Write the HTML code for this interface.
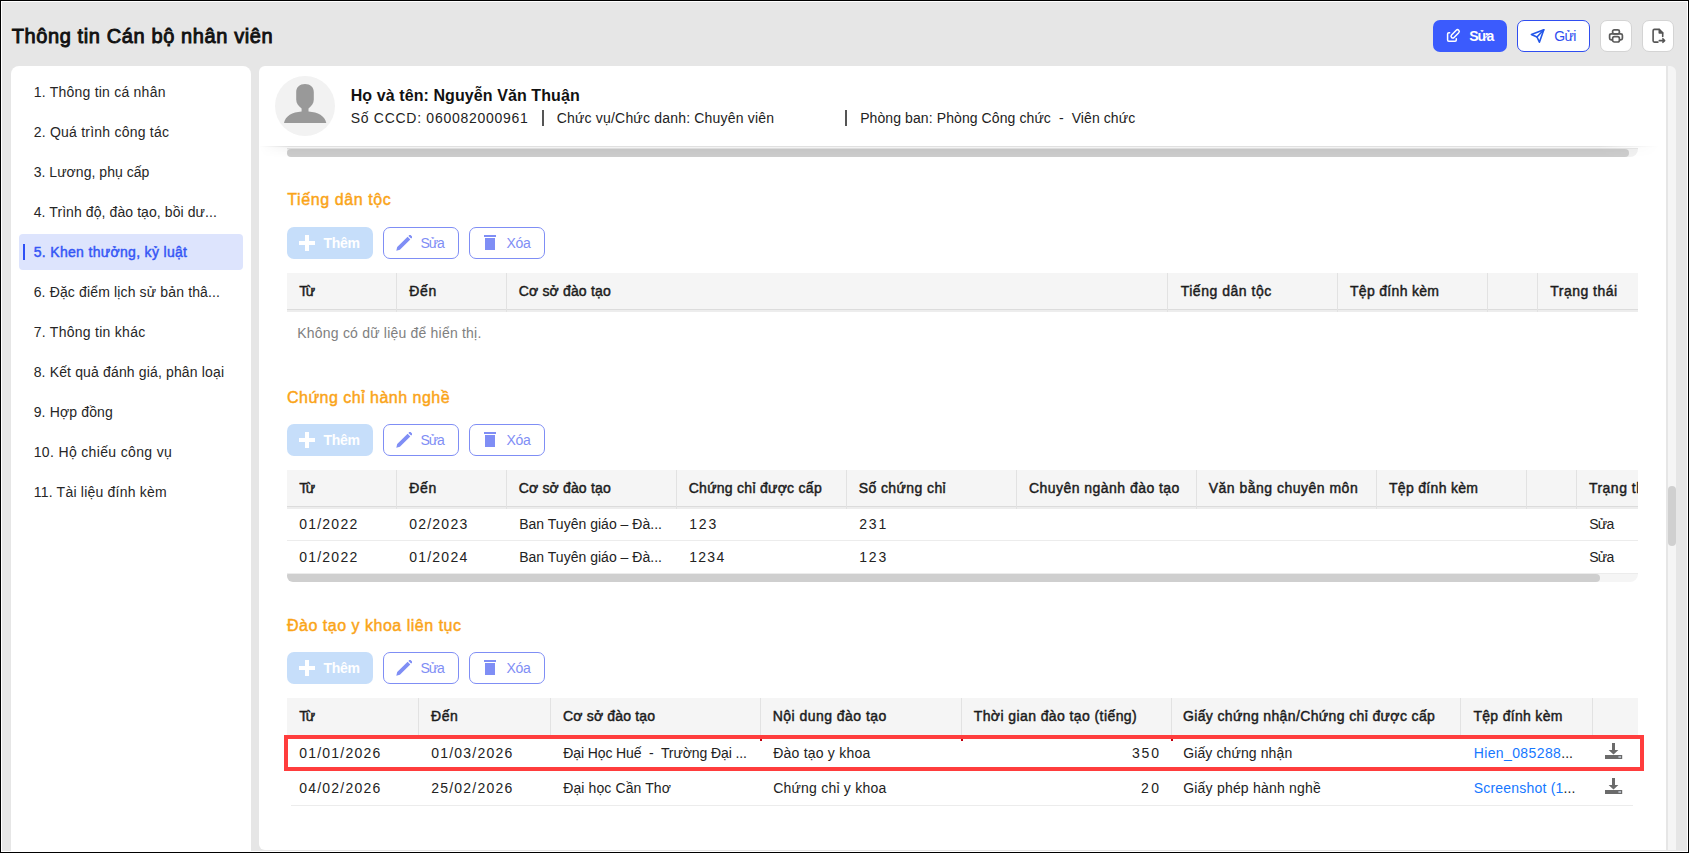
<!DOCTYPE html>
<html><head><meta charset="utf-8">
<style>
html,body{margin:0;padding:0;width:1689px;height:853px;overflow:hidden;background:#000;}
body{position:relative;font-family:"Liberation Sans",sans-serif;}
.a{position:absolute;}
.t{position:absolute;white-space:pre;font-family:"Liberation Sans",sans-serif;}
#frame{position:absolute;left:1px;top:1px;width:1687px;height:851px;background:#fff;}
#bg{position:absolute;left:2px;top:2px;width:1685px;height:849px;background:#e6e6e6;}
.btnb{position:absolute;box-sizing:border-box;border-radius:7px;}
.hd{position:absolute;background:#f5f5f5;}
.vs{position:absolute;width:1px;background:#e2e2e2;}
.hl{position:absolute;height:1px;background:#ececec;}
</style></head><body>
<div id="frame"></div>
<div id="bg"></div>

<!-- sidebar -->
<div class="a" style="left:11px;top:66px;width:240px;height:785px;background:#fff;border-radius:8px 8px 0 0;"></div>
<div class="a" style="left:19px;top:234px;width:224px;height:36px;background:#dde4fd;border-radius:4px;"></div>
<div class="a" style="left:23px;top:244px;width:2px;height:16px;background:#2f50f6;"></div>

<!-- main card -->
<div class="a" style="left:259px;top:66px;width:1407px;height:784px;background:#fff;border-radius:6px 0 0 6px;"></div>
<div class="a" style="left:1668px;top:66px;width:8px;height:784px;background:#f5f5f5;border-radius:0 6px 0 0;"></div>
<div class="a" style="left:1668px;top:486px;width:8px;height:60px;background:#d0d0d0;border-radius:4px;"></div>

<!-- top buttons -->
<div class="btnb" style="left:1433px;top:20px;width:74px;height:32px;background:#3b5bfd;"></div>
<svg class="a" style="left:1442px;top:26px" width="22" height="20" viewBox="0 0 22 20" fill="none" stroke="#fff" stroke-width="1.5" stroke-linecap="round" stroke-linejoin="round">
  <path d="M7.7 6.8H6.8c-.8 0-1.2.4-1.2 1.2v6.1c0 .8.4 1.2 1.2 1.2h6.3c.8 0 1.2-.4 1.2-1.2v-1.4"/>
  <g transform="rotate(-45 13.15 7.85)"><rect x="8.1" y="6.1" width="10.1" height="3.5" rx="1.75"/></g>
</svg>
<div class="btnb" style="left:1517px;top:20px;width:73px;height:32px;background:#fff;border:1px solid #2f4df0;"></div>
<svg class="a" style="left:1530px;top:28px" width="16" height="16" viewBox="0 0 16 16" fill="none" stroke="#2356e8" stroke-width="1.6" stroke-linecap="round" stroke-linejoin="round">
  <path d="M13.8 1.8L1.4 6.5 7 9l2.4 5.2z"/>
  <path d="M13.8 1.8L7 9"/>
</svg>
<div class="btnb" style="left:1600px;top:20px;width:32px;height:32px;background:#fff;border:1px solid #d4d4d4;border-radius:7px;"></div>
<svg class="a" style="left:1608px;top:28px" width="16" height="16" viewBox="0 0 16 16" fill="none" stroke="#5a5a5a" stroke-width="1.7" stroke-linejoin="round">
  <rect x="4.6" y="1.8" width="6.8" height="4" rx="1.6"/>
  <path d="M4.3 11.8H3.2c-1 0-1.6-.6-1.6-1.6V7.4c0-1 .6-1.6 1.6-1.6h9.6c1 0 1.6.6 1.6 1.6v2.8c0 1-.6 1.6-1.6 1.6h-1.1"/>
  <rect x="4.6" y="8.6" width="6.8" height="5.4" rx="1.8"/>
</svg>
<div class="btnb" style="left:1642px;top:20px;width:32px;height:32px;background:#fff;border:1px solid #d4d4d4;border-radius:7px;"></div>
<svg class="a" style="left:1651px;top:28px" width="16" height="16" viewBox="0 0 16 16" fill="none" stroke="#555" stroke-width="1.6" stroke-linejoin="round" stroke-linecap="round">
  <path d="M7 14.1H3.4c-.9 0-1.3-.4-1.3-1.3V2.7c0-.9.4-1.3 1.3-1.3H8.2l3.5 3.5v3.6"/>
  <path d="M8.3 1.6v3.3h3.3" fill="#555"/>
  <path d="M8.3 12.6h5.3M11.9 10.9l1.7 1.7-1.7 1.7"/>
</svg>

<!-- header of main -->
<div class="a" style="left:287px;top:148px;width:1351px;height:9px;background:#f1f1f1;border-top:1px solid #e6e6e6;box-sizing:border-box;border-radius:0 0 8px 8px;"></div>
<div class="a" style="left:287px;top:149px;width:1342px;height:8px;background:#cdcdcd;border-radius:4px;"></div>
<div class="a" style="left:259px;top:146px;width:1400px;height:12px;background:linear-gradient(180deg,rgba(0,0,0,0.12) 0,rgba(0,0,0,0.12) 1px,rgba(0,0,0,0.05) 1px,rgba(0,0,0,0.03) 3px,rgba(0,0,0,0.01) 8px,rgba(0,0,0,0) 12px);-webkit-mask-image:linear-gradient(90deg,transparent 0,#000 30px,#000 1340px,transparent 1400px);"></div>
<svg class="a" style="left:275px;top:76px" width="60" height="60" viewBox="0 0 60 60">
  <circle cx="30" cy="30" r="30" fill="#f2f2f2"/>
  <path fill="#999" d="M21.2 16.2c0-5.2 3.6-8.2 8.8-8.2s8.8 3 8.8 8.2v7.4c0 3.8-2.2 6.8-5.3 8.8v3c9.5 0.6 16.4 4.4 17.8 11.6H9c1.4-7.2 8.2-11 17.6-11.6v-3c-3.2-2-5.4-5-5.4-8.8z"/>
</svg>
<div class="a" style="left:542.2px;top:110px;width:1.9px;height:16px;background:#555;"></div>
<div class="a" style="left:845.4px;top:110px;width:1.9px;height:16px;background:#555;"></div>

<!-- Section buttons -->
<div class="btnb" style="left:287px;top:227px;width:86px;height:32px;background:#c6defa;border-radius:7px;"></div>
<div class="a" style="left:299px;top:241px;width:16px;height:4px;background:#fff;"></div>
<div class="a" style="left:305px;top:235px;width:4px;height:16px;background:#fff;"></div>
<div class="btnb" style="left:383px;top:227px;width:76px;height:32px;border:1px solid #7f8ef5;border-radius:7px;"></div>
<svg class="a" style="left:396px;top:235px" width="16" height="16" viewBox="0 0 16 16"><path fill="#7f8ef5" d="M0.3 15.7l0.9-3.6L11.6 1.7l2.7 2.7L3.9 14.8z M12.4 0.9l0.7-0.7c0.5-0.5 1.2-0.5 1.7 0l1 1c0.5 0.5 0.5 1.2 0 1.7l-0.7 0.7z"/></svg>
<div class="btnb" style="left:469px;top:227px;width:76px;height:32px;border:1px solid #7f8ef5;border-radius:7px;"></div>
<div class="a" style="left:483.5px;top:235px;width:12px;height:1.6px;background:#7f8ef5;"></div>
<div class="a" style="left:484.5px;top:238px;width:10px;height:11.5px;background:#7f8ef5;"></div>
<div class="btnb" style="left:287px;top:424px;width:86px;height:32px;background:#c6defa;border-radius:7px;"></div>
<div class="a" style="left:299px;top:438px;width:16px;height:4px;background:#fff;"></div>
<div class="a" style="left:305px;top:432px;width:4px;height:16px;background:#fff;"></div>
<div class="btnb" style="left:383px;top:424px;width:76px;height:32px;border:1px solid #7f8ef5;border-radius:7px;"></div>
<svg class="a" style="left:396px;top:432px" width="16" height="16" viewBox="0 0 16 16"><path fill="#7f8ef5" d="M0.3 15.7l0.9-3.6L11.6 1.7l2.7 2.7L3.9 14.8z M12.4 0.9l0.7-0.7c0.5-0.5 1.2-0.5 1.7 0l1 1c0.5 0.5 0.5 1.2 0 1.7l-0.7 0.7z"/></svg>
<div class="btnb" style="left:469px;top:424px;width:76px;height:32px;border:1px solid #7f8ef5;border-radius:7px;"></div>
<div class="a" style="left:483.5px;top:432px;width:12px;height:1.6px;background:#7f8ef5;"></div>
<div class="a" style="left:484.5px;top:435px;width:10px;height:11.5px;background:#7f8ef5;"></div>
<div class="btnb" style="left:287px;top:652px;width:86px;height:32px;background:#c6defa;border-radius:7px;"></div>
<div class="a" style="left:299px;top:666px;width:16px;height:4px;background:#fff;"></div>
<div class="a" style="left:305px;top:660px;width:4px;height:16px;background:#fff;"></div>
<div class="btnb" style="left:383px;top:652px;width:76px;height:32px;border:1px solid #7f8ef5;border-radius:7px;"></div>
<svg class="a" style="left:396px;top:660px" width="16" height="16" viewBox="0 0 16 16"><path fill="#7f8ef5" d="M0.3 15.7l0.9-3.6L11.6 1.7l2.7 2.7L3.9 14.8z M12.4 0.9l0.7-0.7c0.5-0.5 1.2-0.5 1.7 0l1 1c0.5 0.5 0.5 1.2 0 1.7l-0.7 0.7z"/></svg>
<div class="btnb" style="left:469px;top:652px;width:76px;height:32px;border:1px solid #7f8ef5;border-radius:7px;"></div>
<div class="a" style="left:483.5px;top:660px;width:12px;height:1.6px;background:#7f8ef5;"></div>
<div class="a" style="left:484.5px;top:663px;width:10px;height:11.5px;background:#7f8ef5;"></div>

<!-- table 1 -->
<div class="hd" style="left:287px;top:273px;width:1351px;height:36px;"></div>
<div class="a" style="left:287px;top:309px;width:1351px;height:1px;background:#dcdcdc;"></div>
<div class="a" style="left:287px;top:310px;width:1351px;height:2px;background:#ededed;"></div>

<!-- table 2 -->
<div class="hd" style="left:287px;top:470px;width:1351px;height:36px;"></div>
<div class="a" style="left:287px;top:506px;width:1351px;height:1px;background:#dcdcdc;"></div>
<div class="a" style="left:287px;top:507px;width:1351px;height:2px;background:#ededed;"></div>
<div class="hl" style="left:287px;top:540px;width:1351px;"></div>
<div class="hl" style="left:287px;top:573px;width:1351px;"></div>
<div class="a" style="left:287px;top:574px;width:1351px;height:8px;background:#f5f5f5;border-radius:0 0 8px 8px;"></div>
<div class="a" style="left:287px;top:574px;width:1313px;height:8px;background:#cfcfcf;border-radius:1px 4px 4px 6px;"></div>

<!-- table 3 -->
<div class="hd" style="left:287px;top:698px;width:1351px;height:37px;"></div>
<div class="hl" style="left:291px;top:805px;width:1342px;"></div>

<div class="vs" style="left:396px;top:273px;height:39px;"></div>
<div class="vs" style="left:506px;top:273px;height:39px;"></div>
<div class="vs" style="left:1167px;top:273px;height:39px;"></div>
<div class="vs" style="left:1337px;top:273px;height:39px;"></div>
<div class="vs" style="left:1487px;top:273px;height:39px;"></div>
<div class="vs" style="left:1537px;top:273px;height:39px;"></div>
<div class="vs" style="left:396px;top:470px;height:39px;"></div>
<div class="vs" style="left:506px;top:470px;height:39px;"></div>
<div class="vs" style="left:676px;top:470px;height:39px;"></div>
<div class="vs" style="left:846px;top:470px;height:39px;"></div>
<div class="vs" style="left:1016px;top:470px;height:39px;"></div>
<div class="vs" style="left:1196px;top:470px;height:39px;"></div>
<div class="vs" style="left:1376px;top:470px;height:39px;"></div>
<div class="vs" style="left:1526px;top:470px;height:39px;"></div>
<div class="vs" style="left:1576px;top:470px;height:39px;"></div>
<div class="vs" style="left:418px;top:698px;height:37px;"></div>
<div class="vs" style="left:550px;top:698px;height:37px;"></div>
<div class="vs" style="left:760px;top:698px;height:37px;"></div>
<div class="vs" style="left:961px;top:698px;height:37px;"></div>
<div class="vs" style="left:1171px;top:698px;height:37px;"></div>
<div class="vs" style="left:1460px;top:698px;height:37px;"></div>
<div class="vs" style="left:1592px;top:698px;height:37px;"></div>
<svg class="a" style="left:1605px;top:743px" width="18" height="16" viewBox="0 0 18 16"><path fill="#6b6b6b" d="M7 0h3v7h3.4L8.5 11.6 3.6 7H7z"/><rect x="0" y="12" width="17.2" height="4" fill="#6b6b6b"/><rect x="13.4" y="13.4" width="2.6" height="1.2" fill="#dfe8f5"/></svg>
<svg class="a" style="left:1605px;top:778px" width="18" height="16" viewBox="0 0 18 16"><path fill="#6b6b6b" d="M7 0h3v7h3.4L8.5 11.6 3.6 7H7z"/><rect x="0" y="12" width="17.2" height="4" fill="#6b6b6b"/><rect x="13.4" y="13.4" width="2.6" height="1.2" fill="#dfe8f5"/></svg>

<span class="t" style="left:11.70px;top:26.00px;font-size:20px;line-height:20px;font-weight:normal;color:#111;letter-spacing:0.611px;-webkit-text-stroke:0.9px #111;">Thông tin Cán bộ nhân viên</span>
<span class="t" style="left:33.70px;top:84.70px;font-size:14px;line-height:14px;font-weight:normal;color:#262626;letter-spacing:0.229px;">1. Thông tin cá nhân</span>
<span class="t" style="left:33.70px;top:124.70px;font-size:14px;line-height:14px;font-weight:normal;color:#262626;letter-spacing:0.228px;">2. Quá trình công tác</span>
<span class="t" style="left:33.70px;top:164.70px;font-size:14px;line-height:14px;font-weight:normal;color:#262626;letter-spacing:0.039px;">3. Lương, phụ cấp</span>
<span class="t" style="left:33.70px;top:204.70px;font-size:14px;line-height:14px;font-weight:normal;color:#262626;letter-spacing:0.088px;">4. Trình độ, đào tạo, bồi dư...</span>
<span class="t" style="left:33.70px;top:244.70px;font-size:14px;line-height:14px;font-weight:normal;color:#3556f5;letter-spacing:0.323px;-webkit-text-stroke:0.45px #3556f5;">5. Khen thưởng, kỷ luật</span>
<span class="t" style="left:33.70px;top:284.70px;font-size:14px;line-height:14px;font-weight:normal;color:#262626;letter-spacing:0.144px;">6. Đặc điểm lịch sử bản thâ...</span>
<span class="t" style="left:33.70px;top:324.70px;font-size:14px;line-height:14px;font-weight:normal;color:#262626;letter-spacing:0.275px;">7. Thông tin khác</span>
<span class="t" style="left:33.70px;top:364.70px;font-size:14px;line-height:14px;font-weight:normal;color:#262626;letter-spacing:0.147px;">8. Kết quả đánh giá, phân loại</span>
<span class="t" style="left:33.70px;top:404.70px;font-size:14px;line-height:14px;font-weight:normal;color:#262626;letter-spacing:0.142px;">9. Hợp đồng</span>
<span class="t" style="left:33.70px;top:444.70px;font-size:14px;line-height:14px;font-weight:normal;color:#262626;letter-spacing:0.346px;">10. Hộ chiếu công vụ</span>
<span class="t" style="left:33.70px;top:484.70px;font-size:14px;line-height:14px;font-weight:normal;color:#262626;letter-spacing:0.219px;">11. Tài liệu đính kèm</span>
<span class="t" style="left:350.70px;top:88.40px;font-size:16px;line-height:16px;font-weight:bold;color:#111;letter-spacing:0.089px;">Họ và tên: Nguyễn Văn Thuận</span>
<span class="t" style="left:350.70px;top:110.70px;font-size:14px;line-height:14px;font-weight:normal;color:#222;letter-spacing:0.717px;">Số CCCD: 060082000961</span>
<span class="t" style="left:556.70px;top:110.70px;font-size:14px;line-height:14px;font-weight:normal;color:#222;letter-spacing:0.195px;">Chức vụ/Chức danh: Chuyên viên</span>
<span class="t" style="left:860.20px;top:110.70px;font-size:14px;line-height:14px;font-weight:normal;color:#222;letter-spacing:0.091px;">Phòng ban: Phòng Công chức  -  Viên chức</span>
<span class="t" style="left:287.20px;top:192.40px;font-size:16px;line-height:16px;font-weight:normal;color:#faa418;letter-spacing:0.603px;-webkit-text-stroke:0.45px #faa418;">Tiếng dân tộc</span>
<span class="t" style="left:287.00px;top:389.70px;font-size:16px;line-height:16px;font-weight:normal;color:#faa418;letter-spacing:0.481px;-webkit-text-stroke:0.45px #faa418;">Chứng chỉ hành nghề</span>
<span class="t" style="left:287.00px;top:617.70px;font-size:16px;line-height:16px;font-weight:normal;color:#faa418;letter-spacing:0.511px;-webkit-text-stroke:0.45px #faa418;">Đào tạo y khoa liên tục</span>
<span class="t" style="left:299.20px;top:284.10px;font-size:14px;line-height:14px;font-weight:normal;color:#1c1c1c;letter-spacing:-1.924px;-webkit-text-stroke:0.45px #1c1c1c;">Từ</span>
<span class="t" style="left:409.20px;top:284.10px;font-size:14px;line-height:14px;font-weight:normal;color:#1c1c1c;letter-spacing:0.659px;-webkit-text-stroke:0.45px #1c1c1c;">Đến</span>
<span class="t" style="left:518.70px;top:284.10px;font-size:14px;line-height:14px;font-weight:normal;color:#1c1c1c;letter-spacing:0.170px;-webkit-text-stroke:0.45px #1c1c1c;">Cơ sở đào tạo</span>
<span class="t" style="left:1180.70px;top:284.10px;font-size:14px;line-height:14px;font-weight:normal;color:#1c1c1c;letter-spacing:0.515px;-webkit-text-stroke:0.45px #1c1c1c;">Tiếng dân tộc</span>
<span class="t" style="left:1350.00px;top:284.10px;font-size:14px;line-height:14px;font-weight:normal;color:#1c1c1c;letter-spacing:0.309px;-webkit-text-stroke:0.45px #1c1c1c;">Tệp đính kèm</span>
<span class="t" style="left:1550.20px;top:284.10px;font-size:14px;line-height:14px;font-weight:normal;color:#1c1c1c;letter-spacing:0.498px;-webkit-text-stroke:0.45px #1c1c1c;">Trạng thái</span>
<span class="t" style="left:297.30px;top:326.00px;font-size:14px;line-height:14px;font-weight:normal;color:#808080;letter-spacing:0.204px;">Không có dữ liệu để hiển thị.</span>
<span class="t" style="left:299.20px;top:481.10px;font-size:14px;line-height:14px;font-weight:normal;color:#1c1c1c;letter-spacing:-1.924px;-webkit-text-stroke:0.45px #1c1c1c;">Từ</span>
<span class="t" style="left:409.20px;top:481.10px;font-size:14px;line-height:14px;font-weight:normal;color:#1c1c1c;letter-spacing:0.659px;-webkit-text-stroke:0.45px #1c1c1c;">Đến</span>
<span class="t" style="left:518.70px;top:481.10px;font-size:14px;line-height:14px;font-weight:normal;color:#1c1c1c;letter-spacing:0.170px;-webkit-text-stroke:0.45px #1c1c1c;">Cơ sở đào tạo</span>
<span class="t" style="left:688.70px;top:481.10px;font-size:14px;line-height:14px;font-weight:normal;color:#1c1c1c;letter-spacing:0.275px;-webkit-text-stroke:0.45px #1c1c1c;">Chứng chỉ được cấp</span>
<span class="t" style="left:858.70px;top:481.10px;font-size:14px;line-height:14px;font-weight:normal;color:#1c1c1c;letter-spacing:0.406px;-webkit-text-stroke:0.45px #1c1c1c;">Số chứng chỉ</span>
<span class="t" style="left:1028.90px;top:481.10px;font-size:14px;line-height:14px;font-weight:normal;color:#1c1c1c;letter-spacing:0.464px;-webkit-text-stroke:0.45px #1c1c1c;">Chuyên ngành đào tạo</span>
<span class="t" style="left:1208.70px;top:481.10px;font-size:14px;line-height:14px;font-weight:normal;color:#1c1c1c;letter-spacing:0.494px;-webkit-text-stroke:0.45px #1c1c1c;">Văn bằng chuyên môn</span>
<span class="t" style="left:1389.00px;top:481.10px;font-size:14px;line-height:14px;font-weight:normal;color:#1c1c1c;letter-spacing:0.309px;-webkit-text-stroke:0.45px #1c1c1c;">Tệp đính kèm</span>
<div class="a" style="left:1580px;top:0;width:58px;height:853px;overflow:hidden;"><div class="a" style="left:-1580px;top:0;width:1689px;height:853px;"><span class="t" style="left:1588.90px;top:481.10px;font-size:14px;line-height:14px;font-weight:normal;color:#1c1c1c;letter-spacing:0.498px;-webkit-text-stroke:0.45px #1c1c1c;">Trạng thái</span></div></div>
<span class="t" style="left:299.20px;top:516.60px;font-size:14px;line-height:14px;font-weight:normal;color:#222;letter-spacing:1.232px;">01/2022</span>
<span class="t" style="left:409.20px;top:516.60px;font-size:14px;line-height:14px;font-weight:normal;color:#222;letter-spacing:1.232px;">02/2023</span>
<span class="t" style="left:519.20px;top:516.60px;font-size:14px;line-height:14px;font-weight:normal;color:#222;letter-spacing:0.015px;">Ban Tuyên giáo – Đà...</span>
<span class="t" style="left:689.20px;top:516.60px;font-size:14px;line-height:14px;font-weight:normal;color:#222;letter-spacing:1.821px;">123</span>
<span class="t" style="left:859.20px;top:516.60px;font-size:14px;line-height:14px;font-weight:normal;color:#222;letter-spacing:1.821px;">231</span>
<span class="t" style="left:1589.20px;top:516.60px;font-size:14px;line-height:14px;font-weight:normal;color:#222;letter-spacing:-0.748px;">Sửa</span>
<span class="t" style="left:299.20px;top:549.60px;font-size:14px;line-height:14px;font-weight:normal;color:#222;letter-spacing:1.232px;">01/2022</span>
<span class="t" style="left:409.20px;top:549.60px;font-size:14px;line-height:14px;font-weight:normal;color:#222;letter-spacing:1.232px;">01/2024</span>
<span class="t" style="left:519.20px;top:549.60px;font-size:14px;line-height:14px;font-weight:normal;color:#222;letter-spacing:0.015px;">Ban Tuyên giáo – Đà...</span>
<span class="t" style="left:689.20px;top:549.60px;font-size:14px;line-height:14px;font-weight:normal;color:#222;letter-spacing:1.285px;">1234</span>
<span class="t" style="left:859.20px;top:549.60px;font-size:14px;line-height:14px;font-weight:normal;color:#222;letter-spacing:1.821px;">123</span>
<span class="t" style="left:1589.20px;top:549.60px;font-size:14px;line-height:14px;font-weight:normal;color:#222;letter-spacing:-0.748px;">Sửa</span>
<span class="t" style="left:299.20px;top:709.10px;font-size:14px;line-height:14px;font-weight:normal;color:#1c1c1c;letter-spacing:-1.924px;-webkit-text-stroke:0.45px #1c1c1c;">Từ</span>
<span class="t" style="left:430.90px;top:709.10px;font-size:14px;line-height:14px;font-weight:normal;color:#1c1c1c;letter-spacing:0.659px;-webkit-text-stroke:0.45px #1c1c1c;">Đến</span>
<span class="t" style="left:563.10px;top:709.10px;font-size:14px;line-height:14px;font-weight:normal;color:#1c1c1c;letter-spacing:0.170px;-webkit-text-stroke:0.45px #1c1c1c;">Cơ sở đào tạo</span>
<span class="t" style="left:772.70px;top:709.10px;font-size:14px;line-height:14px;font-weight:normal;color:#1c1c1c;letter-spacing:0.464px;-webkit-text-stroke:0.45px #1c1c1c;">Nội dung đào tạo</span>
<span class="t" style="left:973.70px;top:709.10px;font-size:14px;line-height:14px;font-weight:normal;color:#1c1c1c;letter-spacing:0.410px;-webkit-text-stroke:0.45px #1c1c1c;">Thời gian đào tạo (tiếng)</span>
<span class="t" style="left:1182.90px;top:709.10px;font-size:14px;line-height:14px;font-weight:normal;color:#1c1c1c;letter-spacing:0.374px;-webkit-text-stroke:0.45px #1c1c1c;">Giấy chứng nhận/Chứng chỉ được cấp</span>
<span class="t" style="left:1473.40px;top:709.10px;font-size:14px;line-height:14px;font-weight:normal;color:#1c1c1c;letter-spacing:0.309px;-webkit-text-stroke:0.45px #1c1c1c;">Tệp đính kèm</span>
<span class="t" style="left:299.20px;top:745.90px;font-size:14px;line-height:14px;font-weight:normal;color:#222;letter-spacing:1.215px;">01/01/2026</span>
<span class="t" style="left:431.20px;top:745.90px;font-size:14px;line-height:14px;font-weight:normal;color:#222;letter-spacing:1.215px;">01/03/2026</span>
<span class="t" style="left:563.20px;top:745.90px;font-size:14px;line-height:14px;font-weight:normal;color:#222;letter-spacing:-0.099px;">Đại Học Huế  -  Trường Đại ...</span>
<span class="t" style="left:773.20px;top:745.90px;font-size:14px;line-height:14px;font-weight:normal;color:#222;letter-spacing:0.218px;">Đào tạo y khoa</span>
<span class="t" style="left:1132.00px;top:745.90px;font-size:14px;line-height:14px;font-weight:normal;color:#222;letter-spacing:1.821px;">350</span>
<span class="t" style="left:1183.20px;top:745.90px;font-size:14px;line-height:14px;font-weight:normal;color:#222;letter-spacing:0.111px;">Giấy chứng nhận</span>
<span class="t" style="left:1473.70px;top:745.90px;font-size:14px;line-height:14px;font-weight:normal;color:#1677ff;letter-spacing:0.387px;">Hien_085288<span style="color:#222;letter-spacing:0">...</span></span>
<span class="t" style="left:299.20px;top:780.90px;font-size:14px;line-height:14px;font-weight:normal;color:#222;letter-spacing:1.215px;">04/02/2026</span>
<span class="t" style="left:431.20px;top:780.90px;font-size:14px;line-height:14px;font-weight:normal;color:#222;letter-spacing:1.215px;">25/02/2026</span>
<span class="t" style="left:563.20px;top:780.90px;font-size:14px;line-height:14px;font-weight:normal;color:#222;letter-spacing:0.111px;">Đại học Cần Thơ</span>
<span class="t" style="left:773.20px;top:780.90px;font-size:14px;line-height:14px;font-weight:normal;color:#222;letter-spacing:0.216px;">Chứng chỉ y khoa</span>
<span class="t" style="left:1141.00px;top:780.90px;font-size:14px;line-height:14px;font-weight:normal;color:#222;letter-spacing:2.428px;">20</span>
<span class="t" style="left:1183.20px;top:780.90px;font-size:14px;line-height:14px;font-weight:normal;color:#222;letter-spacing:0.206px;">Giấy phép hành nghề</span>
<span class="t" style="left:1473.70px;top:780.90px;font-size:14px;line-height:14px;font-weight:normal;color:#1677ff;letter-spacing:0.212px;">Screenshot (1<span style="color:#222;letter-spacing:0">...</span></span>
<span class="t" style="left:1469.20px;top:28.60px;font-size:14px;line-height:14px;font-weight:bold;color:#fff;letter-spacing:-1.131px;">Sửa</span>
<span class="t" style="left:1554.30px;top:28.60px;font-size:14px;line-height:14px;font-weight:normal;color:#2f4df0;letter-spacing:-0.686px;">Gửi</span>
<span class="t" style="left:323.40px;top:236.00px;font-size:14px;line-height:14px;font-weight:bold;color:#fff;letter-spacing:-0.246px;">Thêm</span>
<span class="t" style="left:420.50px;top:236.00px;font-size:14px;line-height:14px;font-weight:normal;color:#7f8ef5;letter-spacing:-1.148px;">Sửa</span>
<span class="t" style="left:506.50px;top:236.00px;font-size:14px;line-height:14px;font-weight:normal;color:#7f8ef5;letter-spacing:-0.355px;">Xóa</span>
<span class="t" style="left:323.40px;top:433.00px;font-size:14px;line-height:14px;font-weight:bold;color:#fff;letter-spacing:-0.246px;">Thêm</span>
<span class="t" style="left:420.50px;top:433.00px;font-size:14px;line-height:14px;font-weight:normal;color:#7f8ef5;letter-spacing:-1.148px;">Sửa</span>
<span class="t" style="left:506.50px;top:433.00px;font-size:14px;line-height:14px;font-weight:normal;color:#7f8ef5;letter-spacing:-0.355px;">Xóa</span>
<span class="t" style="left:323.40px;top:661.00px;font-size:14px;line-height:14px;font-weight:bold;color:#fff;letter-spacing:-0.246px;">Thêm</span>
<span class="t" style="left:420.50px;top:661.00px;font-size:14px;line-height:14px;font-weight:normal;color:#7f8ef5;letter-spacing:-1.148px;">Sửa</span>
<span class="t" style="left:506.50px;top:661.00px;font-size:14px;line-height:14px;font-weight:normal;color:#7f8ef5;letter-spacing:-0.355px;">Xóa</span>

<!-- red box -->
<div class="a" style="left:284px;top:735px;width:1360px;height:36px;box-sizing:border-box;border:4px solid #ff3d3d;"></div>
<div class="a" style="left:760px;top:739px;width:2px;height:2px;background:#c00010;"></div>
<div class="a" style="left:961px;top:739px;width:2px;height:2px;background:#c00010;"></div>
<div class="a" style="left:1171px;top:739px;width:2px;height:2px;background:#c00010;"></div>
</body></html>
